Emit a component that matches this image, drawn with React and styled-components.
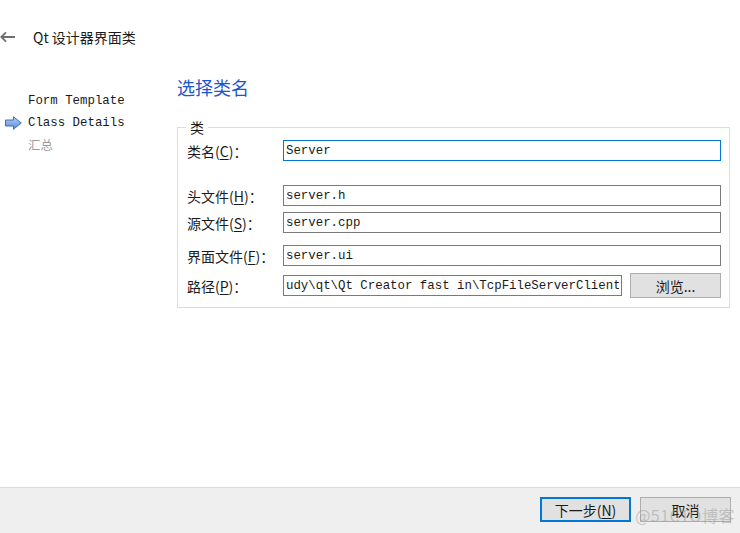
import React from 'react';
import styled, { createGlobalStyle } from 'styled-components';

const GlobalStyle = createGlobalStyle`
  html, body {
    margin: 0;
    padding: 0;
    background: #ffffff;
  }
  body {
    font-family: "Noto Sans CJK SC", "Noto Sans", sans-serif;
    color: #1a1a1a;
  }
`;

const MONO = `"Liberation Mono", "Noto Sans CJK SC", monospace`;

const Page = styled.div`
  width: 740px;
  height: 533px;
  display: flex;
  flex-direction: column;
  background: #fff;
  overflow: hidden;
`;

const Header = styled.div`
  height: 70px;
  display: flex;
  align-items: flex-start;
  padding-top: 26px;
  box-sizing: border-box;
`;

const BackButton = styled.span`
  width: 33px;
  height: 22px;
  display: flex;
  align-items: center;
`;

const Title = styled.span`
  font-size: 14px;
  line-height: 22px;
  color: #1a1a1a;
`;

const Body = styled.div`
  flex: 1;
  display: flex;
`;

const Sidebar = styled.ul`
  list-style: none;
  margin: 0;
  padding: 20px 0 0 0;
  width: 177px;
  flex: none;
`;

const Step = styled.li`
  height: 22px;
  display: flex;
  align-items: center;
  font-family: ${MONO};
  font-size: 12.4px;
  color: ${(p) => (p.$pending ? '#9c9c9c' : '#1a1a1a')};
`;

const StepMarker = styled.span`
  width: 28px;
  display: flex;
  align-items: center;
  padding-left: 5px;
  box-sizing: border-box;
`;

const Content = styled.div`
  flex: 1;
  padding: 4px 10px 0 0;
`;

const PageHeading = styled.h1`
  margin: 0;
  font-size: 18px;
  font-weight: 400;
  line-height: 26px;
  color: #1b55cf;
`;

const GroupBox = styled.div`
  position: relative;
  margin-top: 27px;
  border: 1px solid #dcdcdc;
  padding: 12px 8px 9px 9px;
  display: flex;
  flex-direction: column;
`;

const Legend = styled.span`
  position: absolute;
  top: -11px;
  left: 8px;
  padding: 0 4px;
  background: #fff;
  font-size: 14px;
  line-height: 20px;
`;

const Row = styled.div`
  display: flex;
  align-items: center;
  margin-top: ${(p) => p.$gap || 0}px;
  height: ${(p) => p.$height || 21}px;
`;

const Label = styled.label`
  width: 96px;
  flex: none;
  font-size: 14px;
  white-space: nowrap;
  color: #1a1a1a;
  u {
    text-decoration: underline;
    text-underline-offset: 2px;
  }
`;

const Field = styled.input`
  flex: 1;
  min-width: 0;
  height: 21px;
  box-sizing: border-box;
  margin: 0;
  padding: 0 2px;
  border: 1px solid ${(p) => (p.$focused ? '#0078d7' : '#7a7a7a')};
  outline: none;
  background: #fff;
  font-family: ${MONO};
  font-size: 12.4px;
  color: #1a1a1a;
`;

const Button = styled.button`
  width: ${(p) => p.$width || 91}px;
  height: ${(p) => p.$height || 25}px;
  flex: none;
  margin: 0;
  padding: 0;
  box-sizing: border-box;
  background: #e1e1e1;
  border: ${(p) => (p.$default ? '2px solid #0078d7' : '1px solid #adadad')};
  font-family: "Noto Sans CJK SC", sans-serif;
  font-size: 14px;
  color: #1a1a1a;
  u {
    text-decoration: underline;
    text-underline-offset: 2px;
  }
`;

const BrowseButton = styled(Button)`
  margin-left: 8px;
`;

const Footer = styled.div`
  position: relative;
  height: 46px;
  flex: none;
  border-top: 1px solid #dadada;
  background: #efefef;
  box-sizing: border-box;
  display: flex;
  justify-content: flex-end;
  align-items: flex-start;
  gap: 9px;
  padding: 9px 9px 0 0;
`;

const Watermark = styled.span`
  position: absolute;
  right: 5px;
  bottom: 6px;
  font-size: 16px;
  color: rgba(160, 160, 160, 0.55);
  pointer-events: none;
  letter-spacing: 0.5px;
`;

const BackArrow = () => (
  <svg width="15" height="12" viewBox="0 0 15 12">
    <path d="M15 6H1.5M6 1.3L1.3 6L6 10.7" fill="none" stroke="#6e6e6e" strokeWidth="1.8" />
  </svg>
);

const StepArrow = () => (
  <svg width="17" height="14" viewBox="0 0 17 14">
    <defs>
      <linearGradient id="sa" x1="0" y1="0" x2="0" y2="1">
        <stop offset="0" stopColor="#b4d0f5" />
        <stop offset="1" stopColor="#5a8ed8" />
      </linearGradient>
    </defs>
    <path d="M0.5 4H8.5V0.8L16.3 7L8.5 13.2V10H0.5Z" fill="url(#sa)" stroke="#3b6fc2" strokeWidth="1" />
  </svg>
);

const steps = [
  { id: 1, label: 'Form Template' },
  { id: 2, label: 'Class Details', current: true },
  { id: 3, label: '汇总', pending: true },
];

const App = () => (
  <>
    <GlobalStyle />
    <Page>
      <Header>
        <BackButton><BackArrow /></BackButton>
        <Title>Qt 设计器界面类</Title>
      </Header>
      <Body>
        <Sidebar>
          {steps.map((s) => (
            <Step key={s.id} $pending={s.pending}>
              <StepMarker>{s.current && <StepArrow />}</StepMarker>
              {s.label}
            </Step>
          ))}
        </Sidebar>
        <Content>
          <PageHeading>选择类名</PageHeading>
          <GroupBox>
            <Legend>类</Legend>
            <Row>
              <Label>类名(<u>C</u>)：</Label>
              <Field $focused readOnly value="Server" />
            </Row>
            <Row $gap={24}>
              <Label>头文件(<u>H</u>)：</Label>
              <Field readOnly value="server.h" />
            </Row>
            <Row $gap={6}>
              <Label>源文件(<u>S</u>)：</Label>
              <Field readOnly value="server.cpp" />
            </Row>
            <Row $gap={12}>
              <Label>界面文件(<u>F</u>)：</Label>
              <Field readOnly value="server.ui" />
            </Row>
            <Row $gap={7} $height={25}>
              <Label>路径(<u>P</u>)：</Label>
              <Field readOnly value="udy\qt\Qt Creator fast in\TcpFileServerClient" />
              <BrowseButton>浏览...</BrowseButton>
            </Row>
          </GroupBox>
        </Content>
      </Body>
      <Footer>
        <Button $default $width={91} $height={25}>下一步(<u>N</u>)</Button>
        <Button $width={91} $height={25}>取消</Button>
        <Watermark>@51CTO博客</Watermark>
      </Footer>
    </Page>
  </>
);

export default App;
